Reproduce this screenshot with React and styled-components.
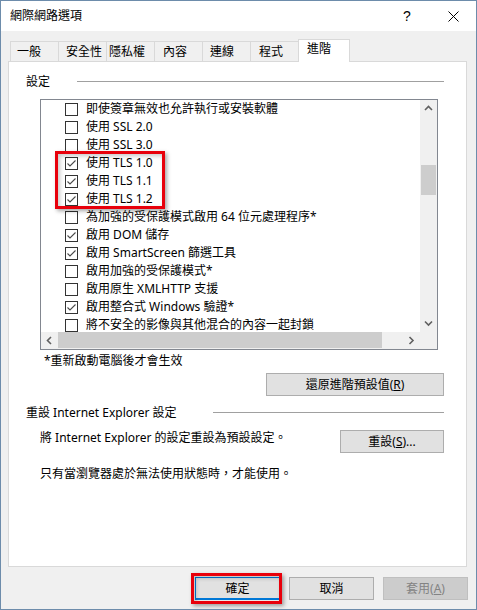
import React from "react";
import styled, { createGlobalStyle } from "styled-components";

const GlobalStyle = createGlobalStyle`
  html, body {
    margin: 0;
    padding: 0;
    background: #ffffff;
  }
  body {
    font-family: "Noto Sans", "Noto Sans CJK TC", sans-serif;
    font-size: 12px;
    color: #000;
  }
`;

const Window = styled.div`
  width: 477px;
  height: 610px;
  box-sizing: border-box;
  border: 1px solid #6d8cab;
  display: flex;
  flex-direction: column;
  background: #f0f0f0;
  overflow: hidden;
`;

const TitleBar = styled.div`
  height: 30px;
  display: flex;
  align-items: center;
  background: #fff;
  padding-left: 9px;
`;

const Title = styled.div`
  flex: 1;
  font-size: 12px;
  line-height: 16px;
`;

const CaptionButton = styled.div`
  width: 46px;
  height: 30px;
  display: flex;
  align-items: center;
  justify-content: center;
  font-family: "Liberation Sans", sans-serif;
  font-size: 14px;
  color: #000;
`;

const Body = styled.div`
  flex: 1;
  display: flex;
  flex-direction: column;
  padding: 8px 9px 0 7px;
`;

const TabRow = styled.div`
  display: flex;
  align-items: flex-end;
  height: 22px;
  padding-left: 2px;
`;

const Tab = styled.div`
  box-sizing: border-box;
  width: ${(p) => (p.active ? 52 : 49)}px;
  height: ${(p) => (p.active ? 23 : 20)}px;
  margin-left: -1px;
  margin-bottom: ${(p) => (p.active ? -1 : 0)}px;
  padding-left: ${(p) => p.pad}px;
  padding-top: ${(p) => (p.active ? 1 : 2)}px;
  border: 1px solid #d9d9d9;
  border-bottom: none;
  background: ${(p) => (p.active ? "#fff" : "#f0f0f0")};
  position: relative;
  z-index: ${(p) => (p.active ? 2 : 1)};
  line-height: 16px;
  white-space: nowrap;
  &:first-child {
    margin-left: 0;
  }
`;

const Panel = styled.div`
  box-sizing: border-box;
  height: 506px;
  background: #fff;
  border: 1px solid #d9d9d9;
  display: flex;
  flex-direction: column;
  position: relative;
  z-index: 1;
`;

const GroupHeader = styled.div`
  display: flex;
  align-items: center;
  height: 16px;
  margin-top: ${(p) => p.top}px;
  padding: 0 22px 0 17px;
`;

const GroupLabel = styled.div`
  width: ${(p) => p.width}px;
  flex: none;
  line-height: 16px;
  white-space: nowrap;
`;

const GroupLine = styled.div`
  flex: 1;
  height: 1px;
  background: #a0a0a0;
  margin-top: -1px;
`;

const ListBox = styled.div`
  box-sizing: border-box;
  margin: 9px 28px 0 31px;
  height: 251px;
  border: 1px solid #828790;
  display: grid;
  grid-template-columns: 1fr 17px;
  grid-template-rows: 1fr 17px;
  overflow: hidden;
`;

const ListContent = styled.div`
  overflow: hidden;
  position: relative;
`;

const Row = styled.div`
  height: 18px;
  display: flex;
  align-items: center;
  padding-left: 24px;
  white-space: nowrap;
  line-height: 18px;
`;

const Box = styled.span`
  box-sizing: border-box;
  width: 13px;
  height: 13px;
  flex: none;
  border: 1px solid #333;
  background: #fff;
  margin-right: 8px;
  display: flex;
  align-items: center;
  justify-content: center;
`;

const Highlight = styled.div`
  position: relative;
  &::after {
    content: "";
    position: absolute;
    box-sizing: border-box;
    top: ${(p) => p.t}px;
    left: ${(p) => p.l}px;
    width: ${(p) => p.w}px;
    height: ${(p) => p.h}px;
    border: 3px solid #e8000b;
    box-shadow: 2px 2px 4px rgba(0, 0, 0, 0.35),
      inset 2px 2px 4px rgba(0, 0, 0, 0.22);
    pointer-events: none;
    z-index: 3;
  }
`;

const VScroll = styled.div`
  background: #f0f0f0;
  display: flex;
  flex-direction: column;
`;

const HScroll = styled.div`
  background: #f0f0f0;
  display: flex;
`;

const Corner = styled.div`
  background: #f0f0f0;
`;

const ArrowButton = styled.div`
  width: 17px;
  height: 17px;
  flex: none;
  display: flex;
  align-items: center;
  justify-content: center;
`;

const Track = styled.div`
  flex: 1;
  display: flex;
  flex-direction: ${(p) => (p.vertical ? "column" : "row")};
`;

const Thumb = styled.div`
  background: #cdcdcd;
  ${(p) =>
    p.vertical
      ? `margin: ${p.offset}px 1px 0 1px; height: ${p.size}px;`
      : `margin: 0 0 1px ${p.offset}px; width: ${p.size}px;`}
`;

const Note = styled.div`
  margin: 3px 0 0 35px;
  line-height: 16px;
`;

const ButtonRow = styled.div`
  display: flex;
  justify-content: ${(p) => p.justify || "flex-end"};
  align-items: flex-start;
  margin-top: ${(p) => p.top}px;
  padding: 0 22px 0 ${(p) => p.left || 0}px;
`;

const Button = styled.div`
  box-sizing: border-box;
  width: ${(p) => p.width}px;
  height: 23px;
  display: flex;
  align-items: center;
  justify-content: center;
  background: ${(p) => (p.disabled ? "#cccccc" : "#e1e1e1")};
  border: 1px solid
    ${(p) => (p.primary ? "#0078d7" : p.disabled ? "#bfbfbf" : "#adadad")};
  box-shadow: ${(p) => (p.primary ? "inset 0 -1px 0 #0078d7" : "none")};
  color: ${(p) => (p.disabled ? "#838383" : "#000")};
  line-height: 16px;
  white-space: nowrap;
  u {
    text-decoration: underline;
    text-underline-offset: 1px;
  }
`;

const Desc = styled.div`
  flex: 1;
  line-height: 16px;
  white-space: nowrap;
`;

const Hint = styled.div`
  margin: 13px 0 0 31px;
  line-height: 16px;
`;

const Footer = styled.div`
  display: flex;
  justify-content: flex-end;
  gap: 9px;
  margin: 10px -1px 0 0;
`;

const Check = () => (
  <svg width="11" height="11" viewBox="0 0 11 11">
    <polyline
      points="1.5,5.5 4,8 9.5,2.5"
      fill="none"
      stroke="#4a4a4a"
      strokeWidth="1.1"
    />
  </svg>
);

const Chevron = ({ dir }) => {
  const pts = {
    up: "1,5 4.5,1.5 8,5",
    down: "1,1.5 4.5,5 8,1.5",
    left: "5,1 1.5,4.5 5,8",
    right: "1.5,1 5,4.5 1.5,8",
  }[dir];
  const vertical = dir === "up" || dir === "down";
  return (
    <svg
      width={vertical ? 9 : 7}
      height={vertical ? 7 : 9}
      viewBox={vertical ? "0 0 9 7" : "0 0 7 9"}
    >
      <polyline points={pts} fill="none" stroke="#606060" strokeWidth="1.6" />
    </svg>
  );
};

const items = [
  { label: "即使簽章無效也允許執行或安裝軟體", checked: false },
  { label: "使用 SSL 2.0", checked: false },
  { label: "使用 SSL 3.0", checked: false },
  { label: "使用 TLS 1.0", checked: true, tls: true },
  { label: "使用 TLS 1.1", checked: true, tls: true },
  { label: "使用 TLS 1.2", checked: true, tls: true },
  { label: "為加強的受保護模式啟用 64 位元處理程序*", checked: false },
  { label: "啟用 DOM 儲存", checked: true },
  { label: "啟用 SmartScreen 篩選工具", checked: true },
  { label: "啟用加強的受保護模式*", checked: false },
  { label: "啟用原生 XMLHTTP 支援", checked: false },
  { label: "啟用整合式 Windows 驗證*", checked: true },
  { label: "將不安全的影像與其他混合的內容一起封鎖", checked: false },
];

const tabs = [
  { name: "一般", pad: 6 },
  { name: "安全性", pad: 7 },
  { name: "隱私權", pad: 2 },
  { name: "內容", pad: 8 },
  { name: "連線", pad: 7 },
  { name: "程式", pad: 8 },
  { name: "進階", pad: 8, active: true },
];

const OptionRow = ({ item }) => (
  <Row>
    <Box>{item.checked && <Check />}</Box>
    {item.label}
  </Row>
);

export default function App() {
  const before = items.slice(0, 3);
  const tls = items.filter((i) => i.tls);
  const after = items.slice(6);

  return (
    <>
      <GlobalStyle />
      <Window>
        <TitleBar>
          <Title>網際網路選項</Title>
          <CaptionButton>?</CaptionButton>
          <CaptionButton>
            <svg width="11" height="11" viewBox="0 0 11 11">
              <path d="M0.5 0.5 L10.5 10.5 M10.5 0.5 L0.5 10.5" stroke="#000" strokeWidth="1" />
            </svg>
          </CaptionButton>
        </TitleBar>
        <Body>
          <TabRow>
            {tabs.map((t) => (
              <Tab key={t.name} active={t.active} pad={t.pad}>
                {t.name}
              </Tab>
            ))}
          </TabRow>
          <Panel>
            <GroupHeader top={12}>
              <GroupLabel width={51}>設定</GroupLabel>
              <GroupLine />
            </GroupHeader>
            <ListBox>
              <ListContent>
                {before.map((it) => (
                  <OptionRow key={it.label} item={it} />
                ))}
                <Highlight t={-3} l={14} w={110} h={58}>
                  {tls.map((it) => (
                    <OptionRow key={it.label} item={it} />
                  ))}
                </Highlight>
                {after.map((it) => (
                  <OptionRow key={it.label} item={it} />
                ))}
              </ListContent>
              <VScroll>
                <ArrowButton>
                  <Chevron dir="up" />
                </ArrowButton>
                <Track vertical>
                  <Thumb vertical offset={48} size={30} />
                </Track>
                <ArrowButton>
                  <Chevron dir="down" />
                </ArrowButton>
              </VScroll>
              <HScroll>
                <ArrowButton>
                  <Chevron dir="left" />
                </ArrowButton>
                <Track>
                  <Thumb offset={0} size={324} />
                </Track>
                <ArrowButton>
                  <Chevron dir="right" />
                </ArrowButton>
              </HScroll>
              <Corner />
            </ListBox>
            <Note>*重新啟動電腦後才會生效</Note>
            <ButtonRow top={4}>
              <Button width={178}>
                還原進階預設值(<u>R</u>)
              </Button>
            </ButtonRow>
            <GroupHeader top={9}>
              <GroupLabel width={187}>重設 Internet Explorer 設定</GroupLabel>
              <GroupLine />
            </GroupHeader>
            <ButtonRow top={9} left={31}>
              <Desc>將 Internet Explorer 的設定重設為預設設定。</Desc>
              <Button width={104}>
                重設(<u>S</u>)...
              </Button>
            </ButtonRow>
            <Hint>只有當瀏覽器處於無法使用狀態時，才能使用。</Hint>
          </Panel>
          <Footer>
            <Highlight t={-4} l={-4} w={91} h={31}>
              <Button width={85} primary>
                確定
              </Button>
            </Highlight>
            <Button width={85}>取消</Button>
            <Button width={85} disabled>
              套用(<u>A</u>)
            </Button>
          </Footer>
        </Body>
      </Window>
    </>
  );
}
